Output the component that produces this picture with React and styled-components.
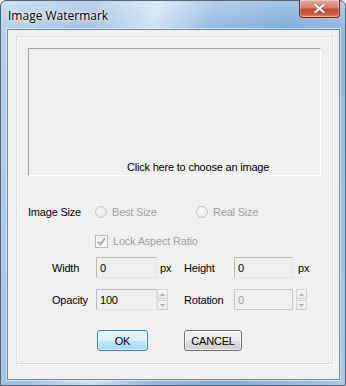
import React from "react";
import styled, { createGlobalStyle } from "styled-components";

const Global = createGlobalStyle`
  html, body { margin: 0; padding: 0; background: #ffffff; }
  * { box-sizing: border-box; }
`;

const Window = styled.div`
  width: 346px;
  height: 386px;
  display: flex;
  flex-direction: column;
  border: 1px solid #52667c;
  border-radius: 6px 6px 0 0;
  padding: 0 5px 5px 6px;
  background:
    linear-gradient(180deg, rgba(255,255,255,0.3) 0px, rgba(255,255,255,0) 28px),
    linear-gradient(100deg, #b9d2ec 0%, #9fc1e4 22%, #cfe2f4 38%, #97bbe2 52%, #80acd8 70%, #a8c8e8 100%);
  font-family: "Liberation Sans", Arial, sans-serif;
  letter-spacing: -0.2px;
`;

const TitleBar = styled.div`
  height: 28px;
  display: flex;
  justify-content: space-between;
  align-items: flex-start;
`;

const Title = styled.div`
  padding: 6px 0 0 1px;
  font-family: "Open Sans", "Noto Sans", sans-serif;
  font-size: 12px;
  letter-spacing: 0;
  color: #000;
  text-shadow: 0 0 6px rgba(255,255,255,0.95), 0 0 3px rgba(255,255,255,0.9);
`;

const CloseButton = styled.div`
  width: 41px;
  height: 18px;
  margin-top: -1px;
  border: 1px solid #6b2a22;
  border-top: none;
  border-radius: 0 0 4px 4px;
  background: linear-gradient(180deg, #e9a99b 0%, #d47f6e 45%, #c24b36 55%, #c9553d 80%, #de8a70 100%);
  box-shadow: inset 0 0 0 1px rgba(255,255,255,0.35);
  display: flex;
  align-items: center;
  justify-content: center;
`;

const Client = styled.div`
  flex: 1;
  border: 1px solid #7489a0;
  box-shadow: 0 0 0 1px rgba(255,255,255,0.5);
  background: #f0f0f0;
  padding: 6px 5px 14px 8px;
  display: flex;
`;

const Group = styled.div`
  width: 317px;
  height: 328px;
  border: 1px solid #d5dfe5;
  box-shadow: inset 1px 1px 0 #ffffff, 1px 1px 0 #ffffff;
  padding: 11px;
  display: flex;
  flex-direction: column;
`;

const ImageBox = styled.div`
  height: 128px;
  border: 1px solid;
  border-color: #a0a0a0 #ffffff #ffffff #a0a0a0;
  display: flex;
  align-items: flex-end;
  padding: 0 0 2px 98px;
  font-size: 11px;
  color: #000;
  cursor: pointer;
`;

const Row = styled.div`
  height: 20px;
  display: flex;
  align-items: center;
  margin-top: ${(p) => p.$mt}px;
  padding-left: ${(p) => p.$pl || 0}px;
  font-size: 11px;
`;

const Label = styled.span`
  width: ${(p) => p.$w}px;
  color: ${(p) => (p.$disabled ? "#a0a0a0" : "#000")};
  white-space: nowrap;
`;

const Option = styled.label`
  width: ${(p) => p.$w || "auto"};
  display: flex;
  align-items: center;
  gap: 5px;
  color: #a0a0a0;
`;

const Radio = styled.span`
  width: 12px;
  height: 12px;
  border-radius: 50%;
  border: 1px solid #c4c4c4;
  background: radial-gradient(circle at 40% 35%, #fbfbfb 0%, #ececec 60%, #dedede 100%);
`;

const Check = styled.span`
  width: 13px;
  height: 13px;
  border: 1px solid #b8b8b8;
  background: linear-gradient(135deg, #ececec, #fbfbfb);
  box-shadow: inset 0 0 0 1px #f6f6f6;
  display: flex;
  align-items: center;
  justify-content: center;
`;

const Grid = styled.div`
  margin-top: 6px;
  padding-left: 24px;
  display: grid;
  grid-template-columns: 44px 61px 27px 50px 59px auto;
  grid-template-rows: 21px 21px;
  row-gap: 11px;
  align-items: center;
  font-size: 11px;
`;

const Input = styled.div`
  height: 21px;
  border: 1px solid;
  border-color: ${(p) => (p.$disabled ? "#c9c9c9" : "#b9b9b9 #e4e4e4 #e4e4e4 #b9b9b9")};
  background: #f0f0f0;
  padding: 4px 0 0 3px;
  color: ${(p) => (p.$disabled ? "#a0a0a0" : "#000")};
`;

const Suffix = styled.span`
  padding-left: ${(p) => p.$pl}px;
  color: #000;
`;

const Spinner = styled.div`
  margin-left: ${(p) => p.$ml}px;
  width: 11px;
  height: 21px;
  display: flex;
  flex-direction: column;
  gap: 1px;
`;

const SpinHalf = styled.div`
  flex: 1;
  border: 1px solid #d2d2d2;
  background: linear-gradient(180deg, #f6f6f6, #ececec);
  display: flex;
  align-items: center;
  justify-content: center;
`;

const Buttons = styled.div`
  margin-top: 20px;
  padding-left: 69px;
  display: flex;
  gap: 36px;
`;

const Button = styled.button`
  width: ${(p) => p.$w}px;
  height: 21px;
  padding: 0;
  font-family: "Liberation Sans", Arial, sans-serif;
  font-size: 11px;
  letter-spacing: -0.2px;
  color: #000;
  border-radius: 3px;
  border: 1px solid ${(p) => (p.$primary ? "#3c7fb1" : "#707070")};
  background: ${(p) =>
    p.$primary
      ? "linear-gradient(180deg, #eaf6fd 0%, #d9f0fc 50%, #bee6fd 50%, #a7d9f5 100%)"
      : "linear-gradient(180deg, #f2f2f2 0%, #ebebeb 50%, #dddddd 50%, #cfcfcf 100%)"};
  box-shadow: inset 0 0 0 1px ${(p) => (p.$primary ? "rgba(255,255,255,0.6)" : "rgba(255,255,255,0.7)")};
`;

const Arrow = ({ up }) => (
  <svg width="5" height="3" viewBox="0 0 5 3">
    <path d={up ? "M0 3 L2.5 0 L5 3 Z" : "M0 0 L2.5 3 L5 0 Z"} fill="#b0b0b0" />
  </svg>
);

const Spin = ({ ml }) => (
  <Spinner $ml={ml}>
    <SpinHalf><Arrow up /></SpinHalf>
    <SpinHalf><Arrow /></SpinHalf>
  </Spinner>
);

export default function App() {
  return (
    <>
      <Global />
      <Window>
        <TitleBar>
          <Title>Image Watermark</Title>
          <CloseButton>
            <svg width="11" height="9" viewBox="0 0 11 9">
              <path d="M1.5 1 L9.5 8 M9.5 1 L1.5 8" stroke="#5a1a12" strokeWidth="3.4" strokeLinecap="square" opacity="0.45" />
              <path d="M1.5 1 L9.5 8 M9.5 1 L1.5 8" stroke="#ffffff" strokeWidth="2.2" strokeLinecap="square" />
            </svg>
          </CloseButton>
        </TitleBar>
        <Client>
          <Group>
            <ImageBox>Click here to choose an image</ImageBox>
            <Row $mt={26}>
              <Label $w={67}>Image Size</Label>
              <Option $w="101px"><Radio />Best Size</Option>
              <Option><Radio />Real Size</Option>
            </Row>
            <Row $mt={9} $pl={67}>
              <Option>
                <Check>
                  <svg width="9" height="9" viewBox="0 0 9 9">
                    <path d="M1 4.5 L3.5 7.5 L8 1" stroke="#a8a8a8" strokeWidth="1.8" fill="none" />
                  </svg>
                </Check>
                Lock Aspect Ratio
              </Option>
            </Row>
            <Grid>
              <Label $w={44}>Width</Label>
              <Input>0</Input>
              <Suffix $pl={3}>px</Suffix>
              <Label $w={50}>Height</Label>
              <Input>0</Input>
              <Suffix $pl={5}>px</Suffix>
              <Label $w={44}>Opacity</Label>
              <Input>100</Input>
              <Spin ml={0} />
              <Label $w={50}>Rotation</Label>
              <Input $disabled>0</Input>
              <Spin ml={3} />
            </Grid>
            <Buttons>
              <Button $primary $w={51}>OK</Button>
              <Button $w={58}>CANCEL</Button>
            </Buttons>
          </Group>
        </Client>
      </Window>
    </>
  );
}
